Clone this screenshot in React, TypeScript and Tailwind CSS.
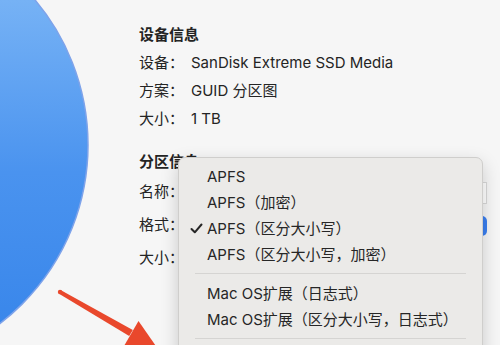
import React from "react";

const font = { fontFamily: 'Inter, "Noto Sans CJK SC", sans-serif' };

function Check() {
  return (
    <svg width="13" height="11" viewBox="0 0 13 11" className="absolute left-[11px] top-[8px]">
      <polyline points="1.5,6 4.8,9.3 11.5,1.5" fill="none" stroke="#262626" strokeWidth="2" strokeLinecap="round" strokeLinejoin="round" />
    </svg>
  );
}

function Item({ text, checked }: { text: string; checked?: boolean }) {
  return (
    <div className="relative h-[26px] flex items-center pl-[28px] text-[15px] text-[#262626] leading-none whitespace-nowrap">
      {checked && <Check />}
      {text}
    </div>
  );
}

function Sep() {
  return <div className="mx-[16px] my-[6px] h-px bg-[#d5d4d2]" />;
}

export default function App() {
  return (
    <div className="relative w-[500px] h-[345px] overflow-hidden bg-[#f6f6f6]" style={font}>
      {/* blue disk graphic */}
      <svg className="absolute left-0 top-0" width="100" height="345" viewBox="0 0 100 345">
        <defs>
          <linearGradient id="g" x1="0" y1="0" x2="0" y2="345" gradientUnits="userSpaceOnUse">
            <stop offset="0" stopColor="#76b2f5" />
            <stop offset="0.5" stopColor="#4a93ef" />
            <stop offset="1" stopColor="#3785ea" />
          </linearGradient>
        </defs>
        <circle cx="-137" cy="145" r="225" fill="url(#g)" stroke="#7ea3ea" strokeWidth="1.5" />
      </svg>

      {/* info content */}
      <div className="pl-[139px] pt-[25px] pr-[13px] text-[15px] text-[#242424]">
        <div className="h-[20px] leading-[20px] font-semibold">设备信息</div>
        <div className="mt-[4px]">
          <div className="h-[28px] flex items-center">
            <span className="w-[52px]">设备：</span>
            <span>SanDisk Extreme SSD Media</span>
          </div>
          <div className="h-[28px] flex items-center">
            <span className="w-[52px]">方案：</span>
            <span>GUID 分区图</span>
          </div>
          <div className="h-[28px] flex items-center">
            <span className="w-[52px]">大小：</span>
            <span>1 TB</span>
          </div>
        </div>

        <div className="mt-[19px] h-[20px] leading-[20px] font-semibold">分区信息</div>
        <div className="mt-[4px]">
          <div className="h-[33px] flex items-center">
            <span className="w-[52px]">名称：</span>
            <div className="flex-1 h-[22px] bg-white border border-[#d9d9d9]" />
          </div>
          <div className="h-[33px] flex items-center">
            <span className="w-[52px]">格式：</span>
            <div className="flex-1 h-[20px] flex justify-end rounded-[5px] bg-white">
              <div className="w-[17px] h-[20px] rounded-[5px] bg-[#3b7ff0]" />
            </div>
          </div>
          <div className="h-[33px] flex items-center">
            <span className="w-[52px]">大小：</span>
            <div className="flex-1 h-[22px]" />
          </div>
        </div>
      </div>

      {/* popup menu */}
      <div className="absolute left-[178px] top-[157px] w-[305px] h-[210px] rounded-[7px] bg-[#ebeae8] border border-[#cfcecc] shadow-[0_6px_18px_rgba(0,0,0,0.18)] pt-[5px]">
        <Item text="APFS" />
        <Item text="APFS（加密）" />
        <Item text="APFS（区分大小写）" checked />
        <Item text="APFS（区分大小写，加密）" />
        <Sep />
        <Item text="Mac OS扩展（日志式）" />
        <Item text="Mac OS扩展（区分大小写，日志式）" />
        <Sep />
      </div>

      {/* red annotation arrow */}
      <svg className="absolute left-0 top-0" width="500" height="345" viewBox="0 0 500 345">
        <circle cx="60" cy="292" r="2.2" fill="#e9482c" />
        <polygon points="61,290.2 132.8,330 129.2,336 59,293.8" fill="#e9482c" />
        <polygon points="138.5,321 124,346 158,349" fill="#e9482c" />
      </svg>
    </div>
  );
}
